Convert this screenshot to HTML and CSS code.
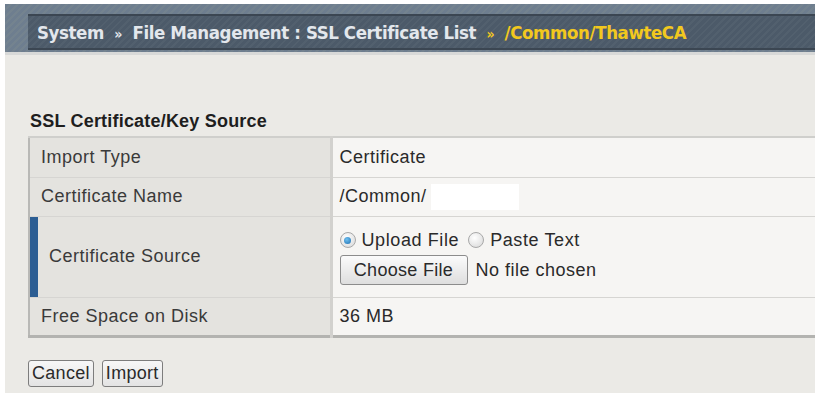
FILE: index.html
```html
<!DOCTYPE html>
<html lang="en">
<head>
    <meta charset="UTF-8">
    <title>SSL Certificate List</title>
    <link rel="stylesheet" href="styles.css">
</head>
<body>

    <div class="page">
        <div class="topbar">
            <div class="crumbs">
                System <span class="sep">&raquo;</span> File Management : SSL Certificate List <span class="sep cur">&raquo;</span> <span class="current">/Common/ThawteCA</span>
            </div>
        </div>

        <div class="content">
            <h3>SSL Certificate/Key Source</h3>

            <table class="props">
                <tr>
                    <td class="label">Import Type</td>
                    <td class="value">Certificate</td>
                </tr>
                <tr>
                    <td class="label">Certificate Name</td>
                    <td class="value">/Common/<span class="masked"></span></td>
                </tr>
                <tr class="required">
                    <td class="label">Certificate Source</td>
                    <td class="value">
                        <div class="radios">
                            <span class="radio checked"></span> Upload File
                            <span class="radio"></span> Paste Text
                        </div>
                        <div class="file-row">
                            <button type="button" class="choose">Choose File</button>
                            <span>No file chosen</span>
                        </div>
                    </td>
                </tr>
                <tr>
                    <td class="label">Free Space on Disk</td>
                    <td class="value">36 MB</td>
                </tr>
            </table>

            <div class="actions">
                <button type="button">Cancel</button>
                <button type="button">Import</button>
            </div>
        </div>
    </div>

</body>
</html>
```

FILE: styles.css
```css
* {
    margin: 0px;
    padding: 0px;
    box-sizing: border-box;
}

body {
    font-family: 'Liberation Sans', Arial, sans-serif;
    background: #fff;
    color: #2a2a2a;
}

.page {
    margin: 4px 5px 5px 5px;
    height: 389px;
    background: #ebeae6;
}

.topbar {
    height: 51px;
    padding: 10px 0 2px 23px;
    background: repeating-linear-gradient(135deg, #6e7e8f 0px, #6e7e8f 3px, #74838f 3px, #74838f 5px);
    border-bottom: 3px solid #d8d9d8;
}

.crumbs {
    height: 36px;
    background: repeating-linear-gradient(135deg, #4c5a69 0px, #4c5a69 3px, #52606e 3px, #52606e 5px);
    border-top: 2px solid #3b4652;
    border-bottom: 2px solid #3b4652;
    padding: 6px 0 0 9px;
    font-family: 'DejaVu Sans Condensed', 'DejaVu Sans', sans-serif;
    font-stretch: condensed;
    font-weight: bold;
    font-size: 18.5px;
    letter-spacing: -0.4px;
    color: #e3e7ec;
    white-space: nowrap;
}

.crumbs .sep {
    font-size: 14px;
    margin: 0 5px;
}

.crumbs .cur,
.crumbs .current {
    color: #f2c81e;
}

.content {
    padding: 0 0 0 23px;
}

h3 {
    font-size: 18px;
    font-weight: bold;
    letter-spacing: 0.2px;
    color: #1e1e1e;
    padding: 56px 0 0 2px;
    height: 81px;
}

.props {
    width: 100%;
    border-collapse: collapse;
    border-left: 2px solid #b9b9b6;
    border-top: 2px solid #cfcfcc;
    border-bottom: 3px solid #b3b3b0;
    font-size: 18px;
    letter-spacing: 0.5px;
}

.props td {
    border-bottom: 1px solid #d6d5d2;
    vertical-align: middle;
}

.props tr {
    height: 40px;
}

.props tr + tr {
    height: 39px;
}

.props .label {
    width: 302px;
    background: #e4e3df;
    color: #3a3a3a;
    padding-left: 11px;
    border-right: 3px solid #d2d1ce;
}

.props .value {
    background: #f6f5f3;
    padding-left: 7px;
}

.props tr.required {
    height: 81px;
}

.props tr.required .label {
    padding-left: 19px;
    box-shadow: inset 8px 0 0 #2c5e93;
}

.masked {
    display: inline-block;
    width: 88px;
    height: 26px;
    background: #fff;
    vertical-align: middle;
    margin-left: 4px;
}

.radios {
    display: flex;
    align-items: center;
    gap: 6px;
    height: 24px;
    letter-spacing: 0.6px;
}

.radio {
    width: 16px;
    height: 16px;
    border-radius: 50%;
    border: 1px solid #a9a9a9;
    background: radial-gradient(circle at 40% 35%, #fff, #d6d6d6);
    position: relative;
}

.radios .radio:nth-of-type(2) {
    margin-left: 3px;
}

.radio.checked::after {
    content: "";
    position: absolute;
    left: 3.5px;
    top: 3.5px;
    width: 7px;
    height: 7px;
    border-radius: 50%;
    background: radial-gradient(circle at 40% 35%, #6fc0f0, #1f6fb0);
}

.file-row {
    display: flex;
    align-items: center;
    gap: 8px;
    margin-top: 3px;
}

button {
    font-family: 'Liberation Sans', Arial, sans-serif;
    font-size: 18px;
    letter-spacing: 0.3px;
    color: #2a2a2a;
    border: 1px solid #8c8c8c;
    border-radius: 3px;
    background: linear-gradient(#fbfbfb, #dedede);
    cursor: pointer;
}

.choose {
    width: 128px;
    height: 30px;
}

.actions {
    display: flex;
    gap: 8px;
    padding-top: 22px;
}

.actions button {
    height: 27px;
    padding: 0 3px;
    background: linear-gradient(#f7f7f7, #e3e3e3);
    border-color: #7d7d7d;
}
```
